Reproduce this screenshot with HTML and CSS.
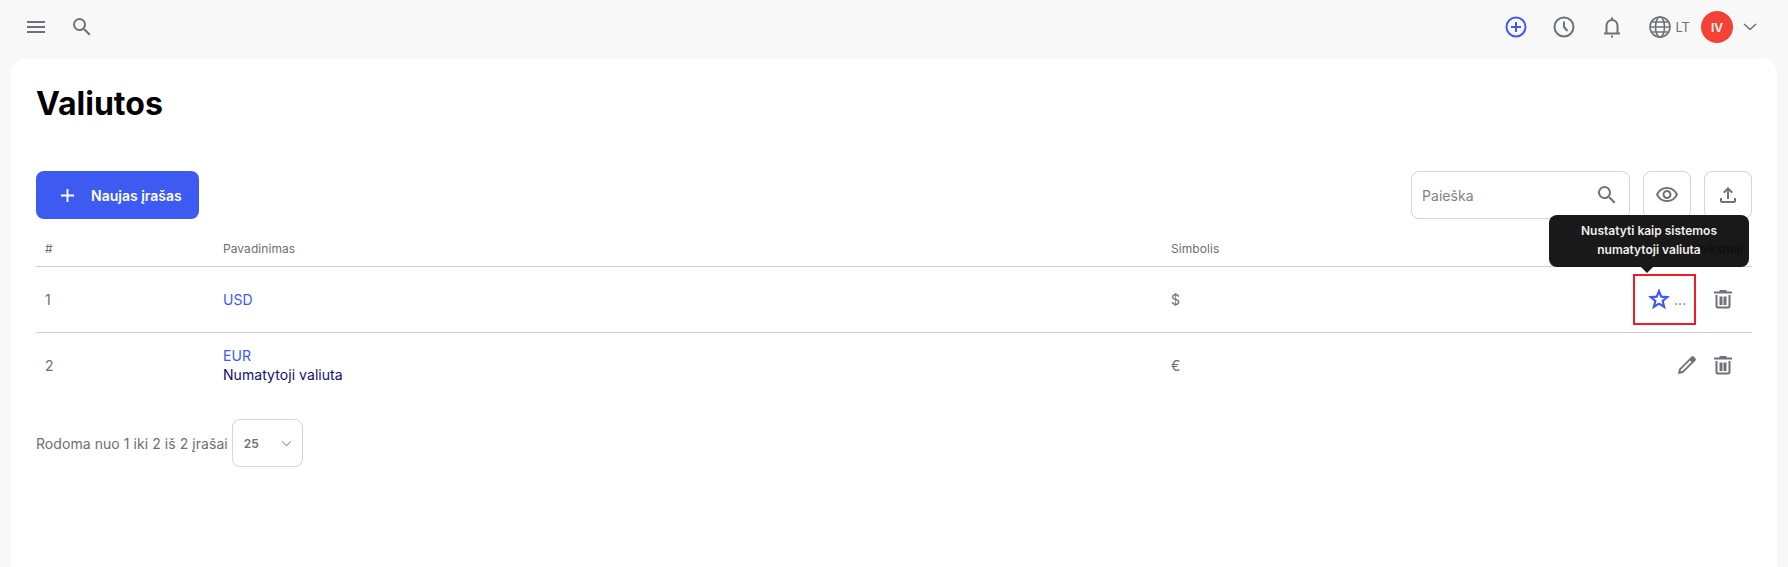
FILE: index.html
```html
<!DOCTYPE html>
<html lang="lt">
<head>
  <meta charset="UTF-8">
  <title>Valiutos</title>
  <link rel="stylesheet" href="styles.css">
</head>
<body>

<header class="topbar">
  <div class="topbar-left">
    <svg class="icon" viewBox="0 0 24 24"><path d="M3 18h18v-2H3v2zm0-5h18v-2H3v2zm0-7v2h18V6H3z"/></svg>
    <svg class="icon" viewBox="0 0 24 24"><path d="M15.5 14h-.79l-.28-.27A6.47 6.47 0 0 0 16 9.5 6.5 6.5 0 1 0 9.5 16c1.61 0 3.09-.59 4.23-1.57l.27.28v.79l5 4.99L20.49 19l-4.99-5zm-6 0C7.01 14 5 11.99 5 9.5S7.01 5 9.5 5 14 7.01 14 9.5 11.99 14 9.5 14z"/></svg>
  </div>
  <div class="topbar-right">
    <svg class="stroke-icon blue" viewBox="0 0 24 24"><circle cx="12" cy="12" r="9.5"/><path d="M12 7v10M7 12h10"/></svg>
    <svg class="stroke-icon" viewBox="0 0 24 24"><circle cx="12" cy="12" r="9.5"/><path d="M12 6.5V12l3.5 4"/></svg>
    <svg class="stroke-icon" viewBox="0 0 24 24"><path d="M4 18.5h16M6.5 18.5v-8a5.5 5.5 0 0 1 11 0v8M12 5V2.5M11 21.5h2"/></svg>
    <div class="lang">
      <svg class="stroke-icon thin" viewBox="0 0 24 24"><circle cx="12" cy="12" r="10"/><ellipse cx="12" cy="12" rx="4.5" ry="10"/><path d="M2 12h20M3.5 7h17M3.5 17h17"/></svg>
      <span>LT</span>
    </div>
    <div class="avatar">IV</div>
    <svg class="chevron" viewBox="0 0 14 8"><path d="M1 1l6 5.5L13 1"/></svg>
  </div>
</header>

<main class="card">
  <h1>Valiutos</h1>

  <div class="toolbar">
    <button class="add-btn" type="button">
      <svg viewBox="0 0 16 16"><path d="M8 1v14M1 8h14"/></svg>
      Naujas įrašas
    </button>
    <div class="tools">
      <div class="search">
        <span>Paieška</span>
        <svg class="icon" viewBox="0 0 24 24"><path d="M15.5 14h-.79l-.28-.27A6.47 6.47 0 0 0 16 9.5 6.5 6.5 0 1 0 9.5 16c1.61 0 3.09-.59 4.23-1.57l.27.28v.79l5 4.99L20.49 19l-4.99-5zm-6 0C7.01 14 5 11.99 5 9.5S7.01 5 9.5 5 14 7.01 14 9.5 11.99 14 9.5 14z"/></svg>
      </div>
      <button class="tool-btn" type="button">
        <svg class="icon" viewBox="0 0 24 24"><path d="M12 6a9.77 9.77 0 0 1 8.82 5.5A9.77 9.77 0 0 1 12 17a9.77 9.77 0 0 1-8.82-5.5A9.77 9.77 0 0 1 12 6m0-2C7 4 2.73 7.11 1 11.5 2.73 15.89 7 19 12 19s9.27-3.11 11-7.5C21.27 7.11 17 4 12 4zm0 5a2.5 2.5 0 0 1 0 5 2.5 2.5 0 0 1 0-5m0-2c-2.48 0-4.5 2.02-4.5 4.5S9.52 16 12 16s4.5-2.02 4.5-4.5S14.48 7 12 7z"/></svg>
      </button>
      <button class="tool-btn" type="button">
        <svg class="icon" viewBox="0 0 24 24"><path d="M18 15v3H6v-3H4v3c0 1.1.9 2 2 2h12c1.1 0 2-.9 2-2v-3h-2zM7 9l1.41 1.41L11 7.83V16h2V7.83l2.59 2.58L17 9l-5-5-5 5z"/></svg>
      </button>
    </div>
  </div>

  <table class="data">
    <thead>
      <tr>
        <th class="col-num">#</th>
        <th class="col-name">Pavadinimas</th>
        <th>Simbolis</th>
        <th class="col-actions">Veiksmai</th>
      </tr>
    </thead>
    <tbody>
      <tr>
        <td>1</td>
        <td><a href="#">USD</a></td>
        <td>$</td>
        <td>
          <div class="actions">
            <div class="highlight">
              <div class="tooltip">Nustatyti kaip sistemos numatytoji valiuta</div>
              <svg class="star" viewBox="0 0 24 24"><path d="M12 3.5l2.5 6 6.5.5-5 4.2 1.6 6.3L12 17.1 6.4 20.5 8 14.2 3 10l6.5-.5z"/></svg>
              <span class="dots">...</span>
            </div>
            <svg class="icon" viewBox="0 0 24 24"><path d="M8.5 3h7v1.5H21v2H3v-2h5.5zM4.5 8h15v11a2.5 2.5 0 0 1-2.5 2.500H7A2.5 2.5 0 0 1 4.5 19zM6.5 8v11a.5.5 0 0 0 .5.5h10a.5.5 0 0 0 .5-.5V8zM8.5 9.500h3V18h-3zm4 0h3V18h-3z" fill-rule="evenodd"/></svg>
          </div>
        </td>
      </tr>
      <tr>
        <td>2</td>
        <td>
          <a href="#">EUR</a>
          <div class="default-note">Numatytoji valiuta</div>
        </td>
        <td>€</td>
        <td>
          <div class="actions">
            <svg class="icon" viewBox="0 0 24 24"><path d="M3 21l1-5L16.5 3.500a1.5 1.5 0 0 1 2 0l2 2a1.5 1.5 0 0 1 0 2L8 20zM5.5 18.5l2-.5L16.500 9 15 7.5 6 16.500z" fill-rule="evenodd"/></svg>
            <svg class="icon" viewBox="0 0 24 24"><path d="M8.5 3h7v1.5H21v2H3v-2h5.5zM4.5 8h15v11a2.5 2.5 0 0 1-2.5 2.500H7A2.5 2.5 0 0 1 4.5 19zM6.5 8v11a.5.5 0 0 0 .5.5h10a.5.5 0 0 0 .5-.5V8zM8.5 9.500h3V18h-3zm4 0h3V18h-3z" fill-rule="evenodd"/></svg>
          </div>
        </td>
      </tr>
    </tbody>
  </table>

  <div class="pager">
    <span>Rodoma nuo 1 iki 2 iš 2 įrašai</span>
    <div class="page-size">
      <span>25</span>
      <svg viewBox="0 0 12 8"><path d="M1 1.5l5 5 5-5"/></svg>
    </div>
  </div>
</main>

</body>
</html>
```

FILE: styles.css
```css
* {
  box-sizing: border-box;
}

html, body {
  height: 100%;
}

body {
  margin: 0;
  display: flex;
  flex-direction: column;
  overflow: hidden;
  background: #f8f8f8;
  color: #6c6f75;
  font-family: Inter, "Liberation Sans", sans-serif;
  font-size: 14px;
  letter-spacing: 0.06px;
}

.icon {
  width: 24px;
  height: 24px;
  fill: #6e7178;
  flex: none;
}

.stroke-icon {
  width: 24px;
  height: 24px;
  fill: none;
  stroke: #6e7178;
  stroke-width: 2;
  flex: none;
}

.stroke-icon.blue {
  stroke: #3d5af1;
}

.stroke-icon.thin {
  stroke-width: 1.6;
}

.topbar {
  height: 58px;
  flex: none;
  display: flex;
  align-items: center;
  justify-content: space-between;
  padding: 0 31px 4px 24px;
}

.topbar-left {
  display: flex;
  align-items: center;
  gap: 22px;
}

.topbar-right {
  display: flex;
  align-items: center;
}

.topbar-right > .stroke-icon {
  margin-right: 24px;
}

.lang {
  display: flex;
  align-items: center;
  gap: 3px;
  font-size: 13px;
  margin-right: 11px;
}

.avatar {
  width: 32px;
  height: 32px;
  border-radius: 50%;
  background: #f44336;
  color: white;
  font-size: 12px;
  font-weight: 600;
  display: flex;
  align-items: center;
  justify-content: center;
}

.chevron {
  width: 14px;
  height: 8px;
  margin-left: 10px;
  fill: none;
  stroke: #6e7178;
  stroke-width: 1.5;
}

.card {
  flex: 1;
  margin: 0 11px;
  padding: 26px 25px 0;
  background: white;
  border-radius: 16px 16px 0 0;
}

h1 {
  margin: 0;
  height: 87px;
  color: black;
  font-size: 32px;
  font-weight: 700;
  line-height: 39px;
  letter-spacing: 0;
}

.toolbar {
  display: flex;
  justify-content: space-between;
  height: 48px;
}

.add-btn {
  width: 163px;
  display: flex;
  align-items: center;
  gap: 16px;
  padding: 0 0 0 24px;
  background: #3d5af1;
  color: white;
  border: none;
  border-radius: 8px;
  font-family: inherit;
  font-size: 14px;
  font-weight: 600;
}

.add-btn svg {
  width: 15px;
  height: 15px;
  fill: none;
  stroke: white;
  stroke-width: 2;
}

.tools {
  display: flex;
  gap: 13px;
}

.search {
  width: 219px;
  display: flex;
  align-items: center;
  justify-content: space-between;
  padding: 0 10px 0 10px;
  border: 1px solid #d5d5d5;
  border-radius: 8px;
  color: #7d8289;
}

.tool-btn {
  width: 48px;
  padding: 0;
  display: flex;
  align-items: center;
  justify-content: center;
  background: white;
  border: 1px solid #d5d5d5;
  border-radius: 8px;
}

.data {
  width: 100%;
  border-collapse: collapse;
  table-layout: fixed;
}

.data th {
  height: 47px;
  padding: 12px 9px 0;
  text-align: left;
  font-size: 12px;
  font-weight: 400;
  border-bottom: 1px solid #cfcfcf;
}

.col-num {
  width: 178px;
}

.col-name {
  width: 948px;
}

.data th.col-actions {
  text-align: right;
}

.data td {
  height: 66px;
  padding: 0 9px;
  border-bottom: 1px solid #cfcfcf;
}

.data tr:last-child td {
  border-bottom: none;
}

.data a {
  color: #3d5af1;
  text-decoration: none;
}

.default-note {
  margin-top: 2px;
  color: #10106b;
}

.actions {
  display: flex;
  align-items: center;
  justify-content: flex-end;
  gap: 12px;
  padding-right: 8px;
}

/* red box drawn round the star button */
.highlight {
  position: relative;
  width: 63px;
  height: 51px;
  margin-right: 3px;
  display: flex;
  align-items: center;
  padding-left: 13px;
  border: 2px solid #ee1c25;
}

.star {
  width: 22px;
  height: 22px;
  fill: none;
  stroke: #3d5af1;
  stroke-width: 2.4;
  flex: none;
}

.dots {
  margin-left: 4px;
  color: #6c7f90;
}

.tooltip {
  position: absolute;
  left: -86px;
  bottom: 56px;
  width: 200px;
  height: 52px;
  padding: 6px 30px;
  background: rgba(0, 0, 0, 0.9);
  color: #eee;
  border-radius: 8px;
  font-size: 12px;
  font-weight: 600;
  line-height: 19px;
  letter-spacing: 0;
  text-align: center;
}

.tooltip::after {
  content: "";
  position: absolute;
  left: 92px;
  bottom: -6px;
  border: 6px solid transparent;
  border-bottom: none;
  border-top-color: rgba(0, 0, 0, 0.9);
}

.pager {
  display: flex;
  align-items: center;
  gap: 4px;
  margin-top: 21px;
}

.page-size {
  width: 71px;
  height: 48px;
  display: flex;
  align-items: center;
  justify-content: space-between;
  padding: 0 10px 0 11px;
  border: 1px solid #d5d5d5;
  border-radius: 8px;
  font-size: 12px;
  font-weight: 600;
}

.page-size svg {
  width: 11px;
  height: 7px;
  fill: none;
  stroke: #9aa0a8;
  stroke-width: 1.2;
}
```
